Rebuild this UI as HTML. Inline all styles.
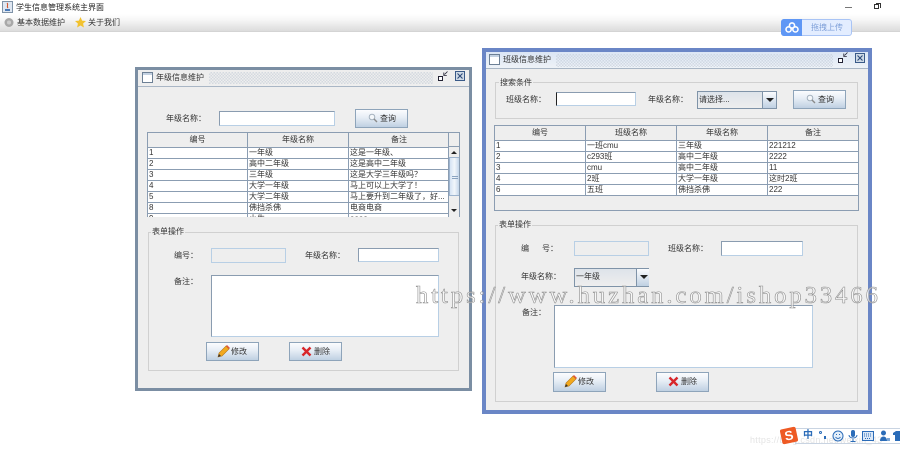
<!DOCTYPE html>
<html lang="zh">
<head>
<meta charset="utf-8">
<style>
html,body{margin:0;padding:0;background:#fff;}
#p{position:relative;width:900px;height:451px;overflow:hidden;background:#fff;font-family:"Liberation Sans","Noto Sans CJK SC",sans-serif;font-size:8px;color:#333;filter:blur(.35px);}
#p div,#p span.a,#p svg{position:absolute;box-sizing:border-box;}
.t{white-space:nowrap;line-height:10px;height:10px;color:#333;}
.win{background:#eeeeee;}
.bump{background-image:linear-gradient(45deg,#c3ccd8 25%,transparent 25%,transparent 75%,#c3ccd8 75%),linear-gradient(45deg,#c3ccd8 25%,transparent 25%,transparent 75%,#c3ccd8 75%);background-size:3px 3px;background-position:0 0,1.500px 1.500px;opacity:.6;}
.in{background:#fff;border:1px solid #b8cfe5;border-top-color:#8a9cb0;border-left-color:#8a9cb0;}
.dis{background:#eeeeee;border:1px solid #b8cfe5;}
.btn{border:1px solid #8ea4ba;background:linear-gradient(#fbfcfe,#e6edf5 45%,#bfd0e2);}
.grp{border:1px solid #d0d0d0;}
.lg{background:#eeeeee;padding:0 1px;}
.combo{border:1px solid #7f93a8;background:linear-gradient(#dde3ea,#eeeeee);}
.arr{background:linear-gradient(#fbfcfe,#bfd0e2);border-left:1px solid #7f93a8;}
.arr:after{content:"";position:absolute;left:3px;top:6px;border:4px solid transparent;border-top:4px solid #222;border-bottom:0;}
table{border-collapse:collapse;table-layout:fixed;position:absolute;font-size:8px;color:#333;background:#fff;}
td,th{border:1px solid #8b9db2;padding:0 0 0 1px;height:11px;line-height:10px;white-space:nowrap;overflow:hidden;font-weight:normal;box-sizing:border-box;}
th{background:#eeeeee;text-align:center;height:15px;padding:0;}
</style>
</head>
<body>
<div id="p">
<!-- main title -->
<svg style="left:2px;top:1px" width="11" height="12" viewBox="0 0 11 12"><rect x=".5" y=".5" width="10" height="11" fill="#dfe7f2" stroke="#7f93a8"/><path d="M3 8h5v2H3z" fill="#4a7ab8"/><path d="M5 2c2 2-1 3 1 5" stroke="#d2522a" fill="none"/></svg>
<div class="t" style="left:16px;top:3px;color:#222">学生信息管理系统主界面</div>
<div style="left:845px;top:7px;width:7px;height:1px;background:#777"></div>
<div style="left:874px;top:4px;width:5px;height:5px;border:1px solid #333"></div>
<div style="left:876px;top:3px;width:5px;height:5px;border:1px solid #333;border-left:0;border-bottom:0"></div>
<!-- menu bar -->
<div style="left:0;top:14px;width:900px;height:18px;background:linear-gradient(#fff,#f6f6f6 35%,#dcdcdc);border-bottom:1px solid #d4d4d4"></div>
<svg style="left:4px;top:17px" width="10" height="11" viewBox="0 0 10 11"><circle cx="5" cy="5.500" r="4.500" fill="#a8a8a8"/><circle cx="5" cy="5.500" r="2" fill="#ccc"/></svg>
<div class="t" style="left:17px;top:18px">基本数据维护</div>
<svg style="left:75px;top:17px" width="11" height="11" viewBox="0 0 11 11"><path d="M5.500 0l1.600 3.600 3.900.4-2.900 2.600.8 3.900-3.400-2-3.400 2 .8-3.900L0 4l3.900-.4z" fill="#f2c230"/></svg>
<div class="t" style="left:88px;top:18px">关于我们</div>
<!-- upload -->
<div style="left:781px;top:19px;width:71px;height:17px;border-radius:3px;background:#e3edff;border:1px solid #a9c4f5"></div>
<div style="left:781px;top:19px;width:21px;height:17px;border-radius:3px 0 0 3px;background:#5f97f5"></div>
<svg style="left:785px;top:22px" width="14" height="11" viewBox="0 0 14 11"><g fill="none" stroke="#fff" stroke-width="1.600"><circle cx="7" cy="3.500" r="2.600"/><circle cx="3.600" cy="7.400" r="2.600"/><circle cx="10.400" cy="7.400" r="2.600"/></g></svg>
<div class="t" style="left:811px;top:23px;color:#7e9fd8">拖拽上传</div>

<!-- LEFT WINDOW -->
<div class="win" style="left:135px;top:67px;width:337px;height:324px;border:3px solid #7b8ea3"></div>
<div style="left:138px;top:70px;width:331px;height:17px;background:#eeeeee;border-bottom:1px solid #a9b6c5"></div>
<svg style="left:142px;top:72px" width="11" height="11" viewBox="0 0 11 11"><rect x=".5" y=".5" width="10" height="10" fill="#fff" stroke="#6d8095"/><rect x="1" y="1" width="9" height="2" fill="#c4d2e2"/></svg>
<div class="t" style="left:156px;top:73px">年级信息维护</div>
<div class="bump" style="left:209px;top:72px;width:224px;height:12px"></div>
<div style="left:438px;top:76px;width:5px;height:5px;border:1px solid #223;background:#fff"></div>
<svg style="left:443px;top:71px" width="5" height="5" viewBox="0 0 5 5"><path d="M4.500.5L1.500 3.500M.8 1.500v3h3" stroke="#223" fill="none" stroke-width=".8"/></svg>
<div style="left:455px;top:71px;width:10px;height:10px;border:1px solid #3a5a88;background:#cfdae6"></div>
<svg style="left:455px;top:71px" width="10" height="10" viewBox="0 0 10 10"><path d="M2.500 2.500l5 5M7.500 2.500l-5 5" stroke="#2d4a78" stroke-width="1.100"/></svg>

<div class="t" style="left:166px;top:114px">年级名称：</div>
<div class="in" style="left:219px;top:111px;width:116px;height:15px"></div>
<div class="btn" style="left:355px;top:109px;width:53px;height:19px"></div>
<svg style="left:368px;top:113px" width="10" height="10" viewBox="0 0 10 10"><circle cx="4" cy="4" r="2.800" fill="#f4f7fa" stroke="#a3b0bd"/><path d="M6 6l3 3" stroke="#8a8a8a" stroke-width="1.400"/></svg>
<div class="t" style="left:380px;top:114px">查询</div>

<div style="left:147px;top:132px;width:313px;height:85px;overflow:hidden;border:1px solid #8b9db2;border-bottom:0;background:#fff">
<table style="left:-1px;top:-1px;width:302px">
<colgroup><col style="width:100px"><col style="width:101px"><col style="width:101px"></colgroup>
<tr><th>编号</th><th>年级名称</th><th>备注</th></tr>
<tr><td>1</td><td>一年级</td><td>这是一年级、</td></tr>
<tr><td>2</td><td>高中二年级</td><td>这是高中二年级</td></tr>
<tr><td>3</td><td>三年级</td><td>这是大学三年级吗？</td></tr>
<tr><td>4</td><td>大学一年级</td><td>马上可以上大学了！</td></tr>
<tr><td>5</td><td>大学二年级</td><td>马上要升到二年级了，好...</td></tr>
<tr><td>8</td><td>佛挡杀佛</td><td>电商电商</td></tr>
<tr><td>9</td><td>小生</td><td>aaaa</td></tr>
</table>
<div style="left:300px;top:0;width:12px;height:14px;background:#eeeeee;border-left:1px solid #8b9db2;border-bottom:1px solid #8b9db2"></div>
<div style="left:300px;top:14px;width:12px;height:70px;background:#eeeeee;border-left:1px solid #8b9db2"></div>
<div style="left:301px;top:24px;width:11px;height:39px;background:linear-gradient(90deg,#d5e3f3,#f2f6fb 50%,#c4d6ea);border:1px solid #9db4cf"></div>
<div style="left:304px;top:43px;width:6px;height:1px;background:#8aa3c0"></div>
<div style="left:304px;top:45px;width:6px;height:1px;background:#8aa3c0"></div>
<div style="left:303px;top:18px;border:3.500px solid transparent;border-bottom:3px solid #222;border-top:0"></div>
<div style="left:303px;top:76px;border:3.500px solid transparent;border-top:3px solid #222;border-bottom:0"></div>
</div>

<div class="grp" style="left:148px;top:232px;width:311px;height:139px"></div>
<div class="t lg" style="left:151px;top:227px">表单操作</div>
<div class="t" style="left:174px;top:251px">编号：</div>
<div class="dis" style="left:211px;top:248px;width:75px;height:15px"></div>
<div class="t" style="left:305px;top:251px">年级名称：</div>
<div class="in" style="left:358px;top:248px;width:81px;height:14px"></div>
<div class="t" style="left:174px;top:277px">备注：</div>
<div class="in" style="left:211px;top:275px;width:228px;height:62px"></div>
<div class="btn" style="left:206px;top:342px;width:53px;height:19px"></div>
<svg style="left:217px;top:345px" width="13" height="13" viewBox="0 0 13 13"><path d="M1 12l1-4 7-7 3 3-7 7z" fill="#f2a91e" stroke="#b5761a" stroke-width=".6"/><path d="M1 12l1-3 2 2z" fill="#333"/><path d="M9 1l3 3 1-1-3-3z" fill="#e2553c"/></svg>
<div class="t" style="left:231px;top:347px">修改</div>
<div class="btn" style="left:289px;top:342px;width:53px;height:19px"></div>
<svg style="left:301px;top:346px" width="11" height="11" viewBox="0 0 11 11"><path d="M1.500 1.500l8 8M9.500 1.500l-8 8" stroke="#d8262a" stroke-width="2.400"/></svg>
<div class="t" style="left:314px;top:347px">删除</div>

<!-- RIGHT WINDOW -->
<div class="win" style="left:482px;top:48px;width:390px;height:366px;border:4px solid #6a86c6"></div>
<div style="left:486px;top:52px;width:382px;height:17px;background:linear-gradient(#dbe6f5,#eef2f7);border-bottom:1px solid #a9b6c5"></div>
<svg style="left:489px;top:54px" width="11" height="11" viewBox="0 0 11 11"><rect x=".5" y=".5" width="10" height="10" fill="#fff" stroke="#6d8095"/><rect x="1" y="1" width="9" height="2" fill="#c4d2e2"/></svg>
<div class="t" style="left:503px;top:55px">班级信息维护</div>
<div class="bump" style="left:556px;top:54px;width:277px;height:13px"></div>
<div style="left:838px;top:58px;width:5px;height:5px;border:1px solid #223;background:#fff"></div>
<svg style="left:843px;top:52px" width="5" height="5" viewBox="0 0 5 5"><path d="M4.500.5L1.500 3.500M.8 1.500v3h3" stroke="#223" fill="none" stroke-width=".8"/></svg>
<div style="left:855px;top:53px;width:10px;height:10px;border:1px solid #3a5a88;background:#cfdae6"></div>
<svg style="left:855px;top:53px" width="10" height="10" viewBox="0 0 10 10"><path d="M2.500 2.500l5 5M7.500 2.500l-5 5" stroke="#2d4a78" stroke-width="1.100"/></svg>

<div class="grp" style="left:495px;top:82px;width:363px;height:37px"></div>
<div class="t lg" style="left:499px;top:78px">搜索条件</div>
<div class="t" style="left:506px;top:95px">班级名称：</div>
<div class="in" style="left:556px;top:92px;width:80px;height:14px;border-left:1px solid #222"></div>
<div class="t" style="left:648px;top:95px">年级名称：</div>
<div class="combo" style="left:697px;top:91px;width:80px;height:18px"></div>
<div class="t" style="left:699px;top:95px">请选择...</div>
<div class="arr" style="left:762px;top:92px;width:14px;height:16px"></div>
<div class="btn" style="left:793px;top:90px;width:53px;height:19px"></div>
<svg style="left:806px;top:94px" width="10" height="10" viewBox="0 0 10 10"><circle cx="4" cy="4" r="2.800" fill="#f4f7fa" stroke="#a3b0bd"/><path d="M6 6l3 3" stroke="#8a8a8a" stroke-width="1.400"/></svg>
<div class="t" style="left:818px;top:95px">查询</div>

<div style="left:494px;top:125px;width:365px;height:86px;overflow:hidden;border:1px solid #8b9db2;background:#eeeeee">
<table style="left:-1px;top:-1px;width:365px">
<colgroup><col style="width:91px"><col style="width:91px"><col style="width:91px"><col style="width:91px"></colgroup>
<tr><th>编号</th><th>班级名称</th><th>年级名称</th><th>备注</th></tr>
<tr><td>1</td><td>一班cmu</td><td>三年级</td><td>221212</td></tr>
<tr><td>2</td><td>c293班</td><td>高中二年级</td><td>2222</td></tr>
<tr><td>3</td><td>cmu</td><td>高中二年级</td><td>11</td></tr>
<tr><td>4</td><td>2班</td><td>大学一年级</td><td>这时2班</td></tr>
<tr><td>6</td><td>五班</td><td>佛挡杀佛</td><td>222</td></tr>
</table>
</div>

<div class="grp" style="left:495px;top:225px;width:363px;height:177px"></div>
<div class="t lg" style="left:498px;top:220px">表单操作</div>
<div class="t" style="left:521px;top:244px">编</div>
<div class="t" style="left:542px;top:244px">号：</div>
<div class="dis" style="left:574px;top:241px;width:75px;height:15px"></div>
<div class="t" style="left:668px;top:244px">班级名称：</div>
<div class="in" style="left:721px;top:241px;width:82px;height:15px"></div>
<div class="t" style="left:521px;top:272px">年级名称：</div>
<div class="combo" style="left:574px;top:268px;width:75px;height:19px"></div>
<div class="t" style="left:576px;top:272px">一年级</div>
<div class="arr" style="left:636px;top:269px;width:13px;height:17px"></div>
<div class="t" style="left:522px;top:308px">备注：</div>
<div class="in" style="left:554px;top:305px;width:259px;height:63px"></div>
<div class="btn" style="left:553px;top:372px;width:53px;height:20px"></div>
<svg style="left:564px;top:375px" width="13" height="13" viewBox="0 0 13 13"><path d="M1 12l1-4 7-7 3 3-7 7z" fill="#f2a91e" stroke="#b5761a" stroke-width=".6"/><path d="M1 12l1-3 2 2z" fill="#333"/><path d="M9 1l3 3 1-1-3-3z" fill="#e2553c"/></svg>
<div class="t" style="left:578px;top:377px">修改</div>
<div class="btn" style="left:656px;top:372px;width:53px;height:20px"></div>
<svg style="left:668px;top:376px" width="11" height="11" viewBox="0 0 11 11"><path d="M1.500 1.500l8 8M9.500 1.500l-8 8" stroke="#d8262a" stroke-width="2.400"/></svg>
<div class="t" style="left:681px;top:377px">删除</div>

<!-- watermark -->
<div style="left:416px;top:282px;white-space:nowrap;font-family:'Liberation Serif',serif;font-size:24.500px;line-height:28px;letter-spacing:3px;color:rgba(255,255,255,.6);-webkit-text-stroke:.6px #8f8f8f">https://www.huzhan.com/ishop33466</div>

<!-- sogou bar -->
<div style="left:750px;top:435px;white-space:nowrap;font-size:9px;line-height:10px;color:#e4e4e4;letter-spacing:.3px">https://blog.csdn.net/weixin_43</div>
<div style="left:795px;top:428px;width:105px;height:16px;border-top:1px solid #c9d4e2;border-bottom:1px solid #c9d4e2;border-left:1px solid #c9d4e2"></div>
<div style="left:781px;top:428px;width:16px;height:15px;background:#ee5a24;transform:rotate(-12deg);border-radius:2px;color:#fff;font-weight:bold;font-size:13px;line-height:15px;text-align:center">S</div>
<div class="t" style="left:803px;top:430px;font-size:10px;line-height:12px;height:12px;color:#2b6cb8;font-weight:bold">中</div>
<div style="left:819px;top:431px;width:3px;height:3px;border:1px solid #2b6cb8;border-radius:50%"></div>
<div style="left:824px;top:436px;width:2px;height:3px;background:#2b6cb8"></div>
<svg style="left:832px;top:430px" width="12" height="12" viewBox="0 0 12 12"><circle cx="6" cy="6" r="5" fill="#e4effa" stroke="#2b6cb8"/><path d="M3.500 7c1.500 2 3.500 2 5 0M4 4.500h1M7 4.500h1" stroke="#2b6cb8" fill="none"/></svg>
<svg style="left:848px;top:430px" width="10" height="12" viewBox="0 0 10 12"><rect x="3" y="0" width="4" height="7" rx="2" fill="#2b6cb8"/><path d="M1 5c0 4 8 4 8 0M5 9v2M2.500 11.500h5" stroke="#2b6cb8" fill="none"/></svg>
<svg style="left:862px;top:431px" width="12" height="10" viewBox="0 0 12 10"><rect x=".5" y=".5" width="11" height="9" fill="#dbe8f7" stroke="#2b6cb8"/><path d="M2 3h8M2 5h8M3 7.500h6" stroke="#2b6cb8" stroke-dasharray="1 1"/></svg>
<svg style="left:879px;top:430px" width="11" height="12" viewBox="0 0 11 12"><circle cx="4.500" cy="3" r="2.500" fill="#2b6cb8"/><path d="M1 11c0-6 7-6 7 0z" fill="#2b6cb8"/><path d="M8 8h3v3H8z" fill="#7aa6d6"/></svg>
<svg style="left:893px;top:430px" width="7" height="12" viewBox="0 0 7 12"><path d="M0 3l3-2h4v10H2V5H0z" fill="#2b6cb8"/></svg>
</div>
</body>
</html>
